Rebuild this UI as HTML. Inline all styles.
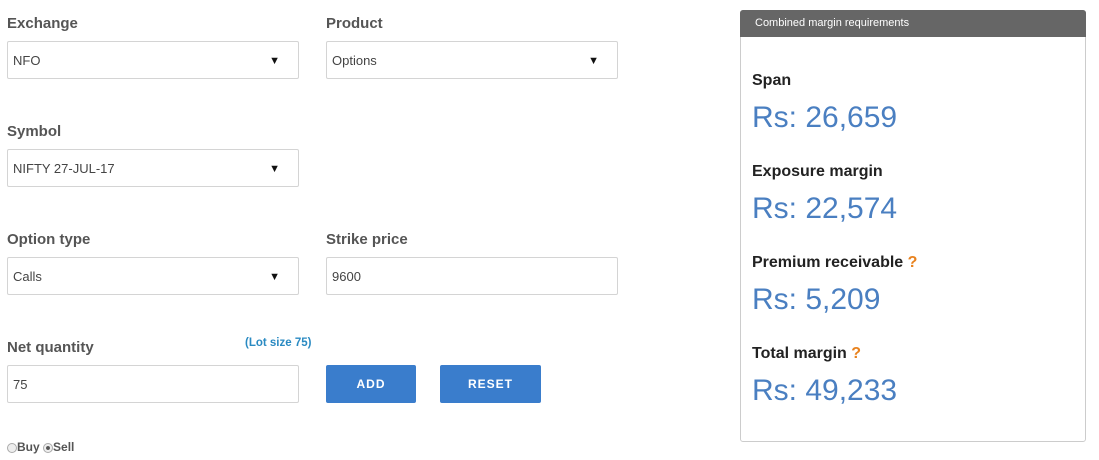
<!DOCTYPE html>
<html><head><style>
body{margin:0;width:1099px;height:460px;background:#fff;font-family:"Liberation Sans",sans-serif;position:relative;overflow:hidden}
.a{position:absolute}
.lbl{font-size:15px;font-weight:bold;color:#555}
.inp{border:1px solid #d4d4d4;border-radius:2px;box-sizing:border-box;height:38px;font-size:13px;color:#444;line-height:38px;padding-left:5px}
.arr{position:absolute;right:18px;top:0;font-size:11px;color:#111}
.btn{background:#3a7dcc;color:#fff;font-size:12px;font-weight:bold;text-align:center;line-height:38px;border-radius:2px;letter-spacing:1px;height:38px}
.k{font-size:16px;font-weight:bold;color:#222;left:752px}
.v{font-size:30px;color:#4a7fc1;left:752px}
.q{color:#e8821e}
</style></head><body>
<div class="a lbl" style="left:7px;top:15px">Exchange</div>
<div class="a lbl" style="left:326px;top:15px">Product</div>
<div class="a inp" style="left:7px;top:41px;width:292px">NFO<span class="arr">▼</span></div>
<div class="a inp" style="left:326px;top:41px;width:292px">Options<span class="arr">▼</span></div>
<div class="a lbl" style="left:7px;top:123px">Symbol</div>
<div class="a inp" style="left:7px;top:149px;width:292px">NIFTY 27-JUL-17<span class="arr">▼</span></div>
<div class="a lbl" style="left:7px;top:231px">Option type</div>
<div class="a lbl" style="left:326px;top:231px">Strike price</div>
<div class="a inp" style="left:7px;top:257px;width:292px">Calls<span class="arr">▼</span></div>
<div class="a inp" style="left:326px;top:257px;width:292px">9600</div>
<div class="a lbl" style="left:7px;top:339px">Net quantity</div>
<div class="a" style="left:245px;top:337px;font-size:11.5px;font-weight:bold;color:#2a8ac2">(Lot size 75)</div>
<div class="a inp" style="left:7px;top:365px;width:292px">75</div>
<div class="a btn" style="left:326px;top:365px;width:90px">ADD</div>
<div class="a btn" style="left:440px;top:365px;width:101px">RESET</div>
<div class="a" style="left:7px;top:440px;font-size:12px;font-weight:bold;color:#555;line-height:14px">
<span style="display:inline-block;width:10px;height:10px;border:1px solid #aaa;border-radius:50%;background:#eee;vertical-align:-2px;box-sizing:border-box"></span>Buy <span style="display:inline-block;width:10px;height:10px;border:1px solid #aaa;border-radius:50%;background:radial-gradient(#555 30%,#eee 40%);vertical-align:-2px;box-sizing:border-box"></span>Sell</div>
<div class="a" style="left:740px;top:10px;width:346px;height:432px;border:1px solid #ccc;border-radius:3px;box-sizing:border-box"></div>
<div class="a" style="left:740px;top:10px;width:346px;height:27px;background:#666;border-radius:3px 3px 0 0;color:#fff;font-size:11px;line-height:27px;padding-left:15px;box-sizing:border-box">Combined margin requirements</div>
<div class="a k" style="top:72px">Span</div>
<div class="a v" style="top:101px">Rs: 26,659</div>
<div class="a k" style="top:163px">Exposure margin</div>
<div class="a v" style="top:192px">Rs: 22,574</div>
<div class="a k" style="top:254px">Premium receivable <span class="q">?</span></div>
<div class="a v" style="top:283px">Rs: 5,209</div>
<div class="a k" style="top:345px">Total margin <span class="q">?</span></div>
<div class="a v" style="top:374px">Rs: 49,233</div>
</body></html>
